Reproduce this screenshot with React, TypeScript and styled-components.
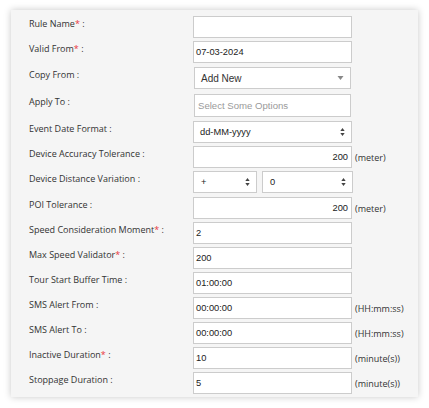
import React from "react";
import styled, { createGlobalStyle } from "styled-components";

const Global = createGlobalStyle`
  html, body { margin: 0; padding: 0; background: #ffffff; }
  body { font-family: "Open Sans", "Liberation Sans", Arial, sans-serif; }
  * { box-sizing: border-box; }
`;

const Page = styled.div`
  width: 429px;
  height: 408px;
  padding: 10px 11px 0 11px;
`;

const Panel = styled.div`
  width: 407px;
  height: 387px;
  background: #f5f5f5;
  box-shadow: 0 0 7px rgba(0, 0, 0, 0.22);
  padding: 6px 0 0 18px;
  display: flex;
  flex-direction: column;
`;

const Row = styled.div<{ $h?: number }>`
  display: flex;
  align-items: flex-start;
  height: ${(p) => p.$h ?? 25}px;
  flex-shrink: 0;
`;

const Label = styled.div`
  width: 164px;
  font-family: "Open Sans", sans-serif;
  font-size: 9px;
  line-height: 16px;
  color: #333;
  white-space: nowrap;
`;

const Star = styled.span`
  color: #e8383d;
`;

const Field = styled.div`
  display: flex;
  align-items: center;
  gap: 3px;
`;

const Box = styled.div<{ $w?: number; $h?: number; $align?: string; $pl?: number; $inset?: boolean }>`
  width: ${(p) => p.$w ?? 159}px;
  height: ${(p) => p.$h ?? 22}px;
  margin-left: ${(p) => (p.$inset ? 1 : 0)}px;
  background: #fff;
  border: 1px solid #cccccc;
  display: flex;
  align-items: center;
  justify-content: ${(p) => (p.$align === "right" ? "flex-end" : "flex-start")};
  padding: 0 3px 0 ${(p) => p.$pl ?? 2}px;
  font-family: "Liberation Sans", Arial, sans-serif;
  font-size: 9.3px;
  color: #222;
  position: relative;
`;

const Placeholder = styled.span`
  color: #9a9a9a;
  font-size: 9.6px;
`;

const Chosen = styled.span`
  font-size: 10px;
  color: #333;
`;

const Arrow = styled.svg`
  position: absolute;
  right: 6px;
  top: 50%;
  transform: translateY(-50%);
`;

const Unit = styled.span`
  font-family: "Open Sans", sans-serif;
  font-size: 9px;
  color: #333;
`;

const Updown = () => (
  <Arrow width="5" height="9" viewBox="0 0 5 9">
    <path d="M2.5 0.5 L4.7 3.5 L0.3 3.5 Z M2.5 8.5 L4.7 5.5 L0.3 5.5 Z" fill="#444" />
  </Arrow>
);

const Down = () => (
  <Arrow width="7" height="5" viewBox="0 0 7 5">
    <path d="M0.5 0.5 L6.5 0.5 L3.5 4.5 Z" fill="#888" />
  </Arrow>
);

type R = { label: string; req?: boolean; value?: string; unit?: string; right?: boolean };

const text: R[] = [
  { label: "POI Tolerance", value: "200", unit: "(meter)", right: true },
  { label: "Speed Consideration Moment", req: true, value: "2" },
  { label: "Max Speed Validator", req: true, value: "200" },
  { label: "Tour Start Buffer Time", value: "01:00:00" },
  { label: "SMS Alert From", value: "00:00:00", unit: "(HH:mm:ss)" },
  { label: "SMS Alert To", value: "00:00:00", unit: "(HH:mm:ss)" },
  { label: "Inactive Duration", req: true, value: "10", unit: "(minute(s))" },
  { label: "Stoppage Duration", value: "5", unit: "(minute(s))" },
];

const Lbl = ({ label, req }: { label: string; req?: boolean }) => (
  <Label>
    {label}
    {req && <Star>*</Star>} :
  </Label>
);

export default function App() {
  return (
    <Page>
      <Global />
      <Panel>
        <Row>
          <Lbl label="Rule Name" req />
          <Field>
            <Box />
          </Field>
        </Row>
        <Row $h={26}>
          <Lbl label="Valid From" req />
          <Field>
            <Box>07-03-2024</Box>
          </Field>
        </Row>
        <Row $h={27}>
          <Lbl label="Copy From" />
          <Field>
            <Box $w={157} $inset $pl={6}>
              <Chosen>Add New</Chosen>
              <Down />
            </Box>
          </Field>
        </Row>
        <Row $h={27}>
          <Lbl label="Apply To" />
          <Field>
            <Box $w={157} $h={23} $inset $pl={3}>
              <Placeholder>Select Some Options</Placeholder>
            </Box>
          </Field>
        </Row>
        <Row>
          <Lbl label="Event Date Format" />
          <Field>
            <Box $pl={6}>
              dd-MM-yyyy
              <Updown />
            </Box>
          </Field>
        </Row>
        <Row>
          <Lbl label="Device Accuracy Tolerance" />
          <Field>
            <Box $align="right">200</Box>
            <Unit>(meter)</Unit>
          </Field>
        </Row>
        <Row $h={26}>
          <Lbl label="Device Distance Variation" />
          <Field>
            <Box $w={64} $pl={7}>
              +
              <Updown />
            </Box>
            <Box $w={91} $pl={7} style={{ marginLeft: 2 }}>
              0
              <Updown />
            </Box>
          </Field>
        </Row>
        {text.map((r) => (
          <Row key={r.label}>
            <Lbl label={r.label} req={r.req} />
            <Field>
              <Box $align={r.right ? "right" : undefined}>{r.value}</Box>
              {r.unit && <Unit>{r.unit}</Unit>}
            </Field>
          </Row>
        ))}
      </Panel>
    </Page>
  );
}
